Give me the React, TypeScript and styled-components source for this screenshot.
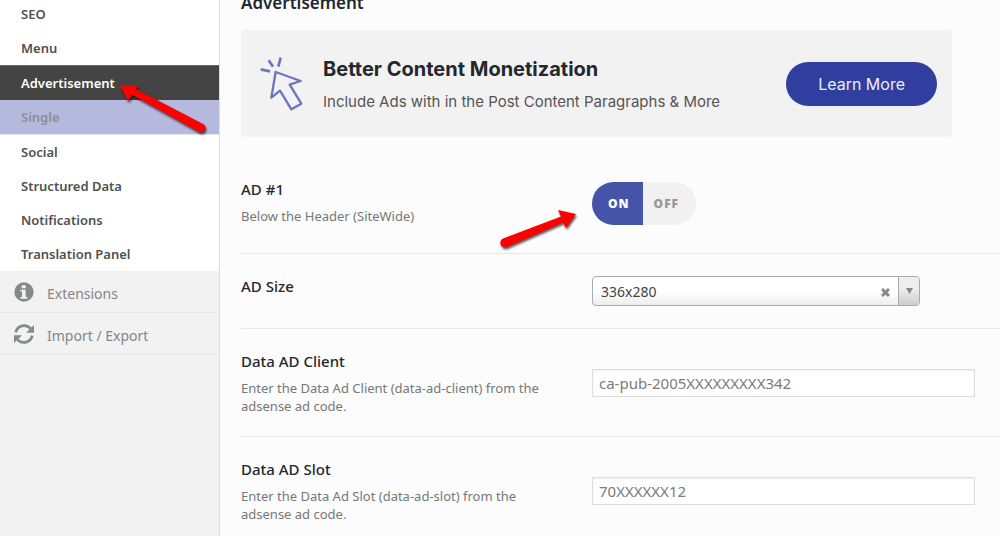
import React, { useState } from "react";
import styled, { createGlobalStyle, css } from "styled-components";

const GlobalStyle = createGlobalStyle`
  *, *::before, *::after { box-sizing: border-box; }
  body {
    margin: 0;
    background: #fcfcfc;
    color: #23282d;
    font-family: "Noto Sans", "Open Sans", sans-serif;
    font-size: 13px;
  }
`;

const Page = styled.div`
  display: flex;
  min-height: 100vh;
  overflow: hidden;
`;

const Sidebar = styled.nav`
  flex: 0 0 220px;
  background: #f2f2f2;
  border-right: 1px solid #dedede;
`;

const SubMenu = styled.ul`
  list-style: none;
  margin: -3px 0 0;
  padding: 0;
  background: #fff;
`;

type ItemState = "normal" | "active" | "hover";

const SubItem = styled.li`
  position: relative;
`;

const SubLink = styled.a<{ $state: ItemState }>`
  display: block;
  padding: 0 21px;
  font-size: 13px;
  font-weight: 600;
  line-height: 34px;
  text-decoration: none;
  color: #505050;
  ${(p) => p.$state === "active" && css`
    border-top: 1px solid #666;
    background: #444;
    color: #fff;
  `}
  ${(p) => p.$state === "hover" && css`
    border-bottom: 1px solid #e4e6f3;
    background: #b4b9dd;
    color: #8f8f94;
  `}
`;

const SectionLink = styled.a`
  display: flex;
  align-items: center;
  gap: 13px;
  height: 42px;
  padding: 0 14px;
  border-bottom: 1px solid #e7e7e7;
  color: #858585;
  font-size: 14px;
  text-decoration: none;
  svg { flex: none; color: #868a88; }
`;

const SectionText = styled.span`
  padding-top: 3px;
`;

const Content = styled.main`
  flex: 1;
  min-width: 0;
  padding-left: 21px;
`;

const Title = styled.h2`
  margin: -10px 0 14px;
  font-size: 17px;
  font-weight: 600;
  line-height: 26px;
`;

const Banner = styled.section`
  display: flex;
  align-items: center;
  margin: 0 48px 20px 0;
  padding: 0 15px 0 18px;
  min-height: 107px;
  border-radius: 4px;
  background: #f2f2f2;
  font-family: "Inter", "Liberation Sans", sans-serif;
`;

const BannerText = styled.div`
  flex: 1;
  margin-left: 19px;
  padding-top: 3px;
`;

const BannerTitle = styled.h3`
  margin: 0 0 8px;
  font-size: 20px;
  font-weight: 700;
  line-height: 26px;
`;

const BannerCopy = styled.p`
  margin: 0;
  color: #555;
  font-size: 15px;
  line-height: 24px;
`;

const LearnMore = styled.a`
  padding: 0 32px;
  border-radius: 22px;
  background: #303f9f;
  color: #eceefa;
  font-size: 16px;
  line-height: 44px;
  text-decoration: none;
`;

const Row = styled.div`
  position: relative;
  display: grid;
  grid-template-columns: 351px minmax(0, 1fr);
  align-items: center;
  border-bottom: 1px solid #e7e7e7;
`;

const RowHead = styled.div`
  align-self: start;
  padding: 22px 36px 21px 0;
`;

const RowTitle = styled.label`
  display: block;
  font-size: 15px;
  font-weight: 500;
  line-height: 20px;
`;

const RowHint = styled.p`
  margin: 8px 0 0;
  color: #777;
  font-size: 13px;
  line-height: 18px;
`;

const Field = styled.div`
  padding: 22px 25px 22px 0;
`;

const Switch = styled.div`
  display: flex;
  width: fit-content;
  margin: 3px 0 6px;
  border-radius: 22px;
  overflow: hidden;
  background: #f1f1f1;
`;

const SwitchOption = styled.label`
  position: relative;
  padding: 0 15px 0 11px;
  color: #999;
  font-family: "Open Sans", sans-serif;
  font-size: 12px;
  font-weight: 800;
  letter-spacing: 1px;
  line-height: 43px;
  &:first-child { padding: 0 13px 0 16px; }
  &:last-child { padding-right: 17px; }
  &:has(input:checked) { background: #4553a8; color: #fff; }
`;

const HiddenRadio = styled.input`
  position: absolute;
  inset: 0;
  margin: 0;
  opacity: 0;
`;

const SelectBox = styled.div`
  position: relative;
  max-width: 328px;
`;

const Select = styled.select`
  display: block;
  width: 100%;
  height: 30px;
  padding: 0 60px 0 8px;
  appearance: none;
  border: 1px solid #aaa;
  border-radius: 4px;
  background: linear-gradient(#fff 50%, #eee);
  color: #444;
  font-family: inherit;
  font-size: 14px;
`;

const ClearButton = styled.button`
  position: absolute;
  top: 10px;
  right: 28px;
  display: flex;
  padding: 2px;
  border: 0;
  background: none;
  color: #888;
`;

const SelectHandle = styled.span`
  position: absolute;
  top: 1px;
  right: 1px;
  bottom: 1px;
  display: flex;
  align-items: center;
  justify-content: center;
  width: 21px;
  border-left: 1px solid #aaa;
  border-radius: 0 3px 3px 0;
  background: linear-gradient(#eee 40%, #ccc);
  pointer-events: none;
`;

const TextInput = styled.input`
  display: block;
  width: 100%;
  height: 28px;
  padding: 0 6px;
  border: 1px solid #ddd;
  background: #fff;
  box-shadow: inset 0 1px 2px rgba(0, 0, 0, 0.07);
  color: #7b7b7b;
  font-family: inherit;
  font-size: 15px;
`;

const Pointer = styled.svg<{ $left: number; $top: number }>`
  position: absolute;
  z-index: 2;
  left: ${(p) => p.$left}px;
  top: ${(p) => p.$top}px;
  overflow: visible;
  pointer-events: none;
  fill: #f00;
  filter: drop-shadow(1px 2px 1px rgba(0, 0, 0, 0.65));
`;

const MENU: { label: string; state: ItemState }[] = [
  { label: "SEO", state: "normal" },
  { label: "Menu", state: "normal" },
  { label: "Advertisement", state: "active" },
  { label: "Single", state: "hover" },
  { label: "Social", state: "normal" },
  { label: "Structured Data", state: "normal" },
  { label: "Notifications", state: "normal" },
  { label: "Translation Panel", state: "normal" },
];

function ClickIcon() {
  return (
    <svg width="45" height="55" viewBox="88 168 135 165" fill="none" stroke="#6b76c0" strokeWidth="7" strokeLinejoin="round" aria-hidden="true">
      <path d="M93 208l28 6M117 181l13 19M153 173l-7 27" strokeWidth="8" />
      <path d="M138 216L213 243L180 254L215 311L185 328L151 272L125 293Z" />
    </svg>
  );
}

function InfoIcon() {
  return (
    <svg width="20" height="20" viewBox="0 0 60 60" aria-hidden="true">
      <circle cx="30" cy="30" r="29" fill="currentColor" />
      <path d="M23 10h12v9H23zM19 23h16v22h5v5H19v-5h5V28h-5z" fill="#f2f2f2" />
    </svg>
  );
}

function RefreshIcon() {
  return (
    <svg width="20" height="20" viewBox="0 0 60 60" fill="none" stroke="currentColor" strokeWidth="8" aria-hidden="true">
      <path d="M5 25A26 26 0 0 1 50 14M55 35A26 26 0 0 1 10 46" />
      <path d="M60 3V26H36ZM0 57V34H24Z" fill="currentColor" stroke="none" />
    </svg>
  );
}

export default function App() {
  const [adOn, setAdOn] = useState(true);
  const [size, setSize] = useState("336x280");

  return (
    <>
      <GlobalStyle />
      <Page>
        <Sidebar>
          <SubMenu>
            {MENU.map(({ label, state }) => (
              <SubItem key={label}>
                <SubLink href="#" $state={state}>{label}</SubLink>
                {state === "active" && (
                  <Pointer $left={120} $top={20} width="86" height="48" viewBox="0 0 86 48" aria-hidden="true">
                    <path d="M0 1L18 0L16 4L83 39A4 4 0 0 1 79 47L12.5 10L8 16Z" />
                  </Pointer>
                )}
              </SubItem>
            ))}
          </SubMenu>
          <SectionLink href="#"><InfoIcon /><SectionText>Extensions</SectionText></SectionLink>
          <SectionLink href="#"><RefreshIcon /><SectionText>Import / Export</SectionText></SectionLink>
        </Sidebar>

        <Content>
          <Title>Advertisement</Title>
          <Banner>
            <ClickIcon />
            <BannerText>
              <BannerTitle>Better Content Monetization</BannerTitle>
              <BannerCopy>Include Ads with in the Post Content Paragraphs &amp; More</BannerCopy>
            </BannerText>
            <LearnMore href="#">Learn More</LearnMore>
          </Banner>

          <Row>
            <RowHead>
              <RowTitle as="div" id="ad-1">AD #1</RowTitle>
              <RowHint>Below the Header (SiteWide)</RowHint>
            </RowHead>
            <Field>
              <Switch role="radiogroup" aria-labelledby="ad-1">
                <SwitchOption>
                  <HiddenRadio type="radio" name="ad1" checked={adOn} onChange={() => setAdOn(true)} />ON
                </SwitchOption>
                <SwitchOption>
                  <HiddenRadio type="radio" name="ad1" checked={!adOn} onChange={() => setAdOn(false)} />OFF
                </SwitchOption>
              </Switch>
            </Field>
            <Pointer $left={259} $top={53} width="76" height="38" viewBox="0 0 76 38" aria-hidden="true">
              <path d="M76 4L58 0L61 6.5L3 28.5A4.5 4.5 0 0 0 7 37L63 12.5L66 18Z" />
            </Pointer>
          </Row>

          <Row>
            <RowHead><RowTitle htmlFor="ad-size">AD Size</RowTitle></RowHead>
            <Field>
              <SelectBox>
                <Select id="ad-size" value={size} onChange={(e) => setSize(e.target.value)}>
                  <option value=""></option>
                  <option>336x280</option>
                </Select>
                <ClearButton type="button" aria-label="Clear size" onClick={() => setSize("")}>
                  <svg width="9" height="9" viewBox="0 0 9 9" stroke="currentColor" strokeWidth="3"><path d="M1 1l7 7M8 1L1 8" /></svg>
                </ClearButton>
                <SelectHandle>
                  <svg width="7" height="6" viewBox="0 0 7 6" fill="#888"><path d="M0 0h7L3.5 6z" /></svg>
                </SelectHandle>
              </SelectBox>
            </Field>
          </Row>

          <Row>
            <RowHead>
              <RowTitle htmlFor="client">Data AD Client</RowTitle>
              <RowHint>Enter the Data Ad Client (data-ad-client) from the adsense ad code.</RowHint>
            </RowHead>
            <Field><TextInput id="client" defaultValue="ca-pub-2005XXXXXXXXX342" /></Field>
          </Row>

          <Row>
            <RowHead>
              <RowTitle htmlFor="slot">Data AD Slot</RowTitle>
              <RowHint>Enter the Data Ad Slot (data-ad-slot) from the adsense ad code.</RowHint>
            </RowHead>
            <Field><TextInput id="slot" defaultValue="70XXXXXX12" /></Field>
          </Row>
        </Content>
      </Page>
    </>
  );
}
